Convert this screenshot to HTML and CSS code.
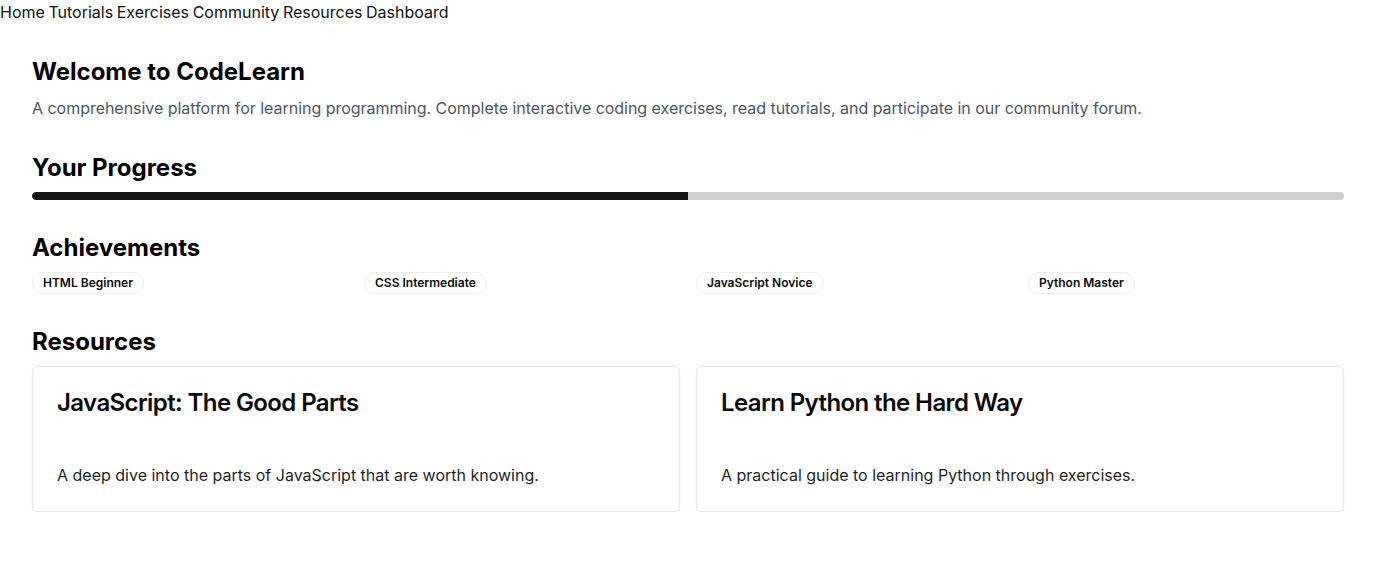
FILE: index.html
```html
<!DOCTYPE html>
<html lang="en">
<head>
<meta charset="utf-8">
<title>CodeLearn</title>
<link rel="stylesheet" href="styles.css">
</head>
<body>
<nav class="nav">
  <a href="#">Home</a>
  <a href="#">Tutorials</a>
  <a href="#">Exercises</a>
  <a href="#">Community</a>
  <a href="#">Resources</a>
  <a href="#">Dashboard</a>
</nav>
<main class="main">
  <section class="section">
    <h1 class="heading">Welcome to CodeLearn</h1>
    <p class="lead">A comprehensive platform for learning programming. Complete interactive coding exercises, read tutorials, and participate in our community forum.</p>
  </section>
  <section class="section">
    <h2 class="heading">Your Progress</h2>
    <div class="progress"><div class="progress-fill" style="width:50%"></div></div>
  </section>
  <section class="section">
    <h2 class="heading">Achievements</h2>
    <div class="badges">
      <div class="badge-cell"><span class="badge">HTML Beginner</span></div>
      <div class="badge-cell"><span class="badge">CSS Intermediate</span></div>
      <div class="badge-cell"><span class="badge">JavaScript Novice</span></div>
      <div class="badge-cell"><span class="badge">Python Master</span></div>
    </div>
  </section>
  <section class="section">
    <h2 class="heading">Resources</h2>
    <div class="cards">
      <div class="card">
        <div class="card-header"><h3 class="card-title">JavaScript: The Good Parts</h3></div>
        <div class="card-content"><p class="card-text">A deep dive into the parts of JavaScript that are worth knowing.</p></div>
      </div>
      <div class="card">
        <div class="card-header"><h3 class="card-title">Learn Python the Hard Way</h3></div>
        <div class="card-content"><p class="card-text">A practical guide to learning Python through exercises.</p></div>
      </div>
    </div>
  </section>
</main>
</body>
</html>
```

FILE: styles.css
```css
* { box-sizing: border-box; }
html, body { margin: 0; padding: 0; }
body {
  font-family: Inter, "Noto Sans", sans-serif;
  font-size: 16px;
  line-height: 24px;
  color: #0a0a0a;
  background: #fff;
}
.nav {
  display: flex;
  gap: 3.6px;
  height: 24px;
  white-space: nowrap;
}
.nav a {
  color: #111;
  text-decoration: none;
}
.main {
  padding: 32px 32px 0;
  display: flex;
  flex-direction: column;
  gap: 32px;
}
.section { margin: 0; }
.heading {
  margin: 0 0 8px;
  font-size: 24px;
  line-height: 32px;
  font-weight: 700;
  color: #000;
}
.lead {
  margin: 0;
  color: #4b5563;
  letter-spacing: -0.03px;
}
.progress {
  height: 8px;
  border-radius: 4px;
  background: #cfcfcf;
  overflow: hidden;
}
.progress-fill {
  height: 100%;
  background: #18181b;
  border-radius: 4px 0 0 4px;
}
.badges {
  display: grid;
  grid-template-columns: repeat(4, 1fr);
  gap: 16px;
}
.badge-cell {
  display: flex;
  align-items: flex-start;
}
.badge {
  display: block;
  font-size: 12px;
  line-height: 16px;
  font-weight: 600;
  padding: 2px 10px;
  border: 1px solid #ececec;
  border-radius: 999px;
  color: #0a0a0a;
}
.cards {
  display: grid;
  grid-template-columns: 1fr 1fr;
  gap: 16px;
}
.card {
  border: 1px solid #e5e7eb;
  border-radius: 6px;
  box-shadow: 0 1px 2px rgba(0,0,0,0.05);
  background: #fff;
}
.card-header { padding: 24px; }
.card-title {
  margin: 0;
  font-size: 24px;
  line-height: 24px;
  font-weight: 600;
  letter-spacing: -0.6px;
  color: #0a0a0a;
}
.card-content { padding: 24px; }
.card-text {
  margin: 0;
  color: #1f1f1f;
}
```
